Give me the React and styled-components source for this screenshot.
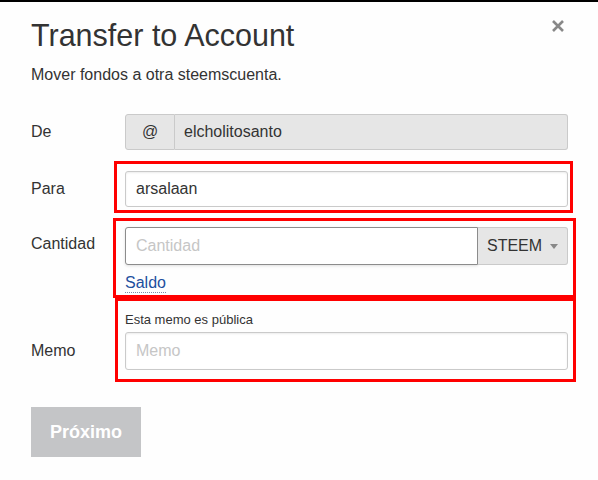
import styled, { createGlobalStyle } from 'styled-components';

const GlobalStyle = createGlobalStyle`
  html, body {
    margin: 0;
    padding: 0;
    background: #fefefe;
  }
  body {
    font-family: 'Liberation Sans', Arial, sans-serif;
    color: #333;
  }
  * {
    box-sizing: border-box;
  }
`;

const TopBar = styled.div`
  height: 2px;
  background: #000;
`;

const Modal = styled.div`
  position: relative;
  display: flow-root;
  width: 598px;
  min-height: 478px;
  padding: 0 30px 0 31px;
  background: #fefefe;
`;

const CloseButton = styled.button`
  position: absolute;
  top: 18px;
  right: 34px;
  width: 12px;
  height: 12px;
  padding: 0;
  border: 0;
  background: none;
  cursor: pointer;
  display: flex;
`;

const Title = styled.h1`
  margin: 15px 0 0;
  font-size: 30.5px;
  line-height: 36px;
  font-weight: 400;
  color: #333;
`;

const Subtitle = styled.p`
  margin: 12px 0 0;
  font-size: 16px;
  line-height: 20px;
  color: #333;
`;

const Form = styled.form`
  margin-top: 29px;
  display: flex;
  flex-direction: column;
`;

const Row = styled.div`
  display: grid;
  grid-template-columns: 94px 1fr;
  align-items: start;
  margin-bottom: ${p => p.$gap || 0}px;
`;

const Label = styled.label`
  padding-top: ${p => p.$offset}px;
  font-size: 16px;
  line-height: 20px;
  color: #333;
`;

const Field = styled.div`
  position: relative;
  display: flex;
  flex-direction: column;

  &::after {
    content: ${p => (p.$mark ? "''" : 'none')};
    position: absolute;
    top: ${p => -(p.$mark?.[0] || 0)}px;
    right: ${p => -(p.$mark?.[1] || 0)}px;
    bottom: ${p => -(p.$mark?.[2] || 0)}px;
    left: ${p => -(p.$mark?.[3] || 0)}px;
    border: 3px solid #ff0000;
    pointer-events: none;
  }
`;

const Group = styled.div`
  display: flex;
  height: ${p => p.$height || 36}px;
`;

const Addon = styled.span`
  display: flex;
  align-items: center;
  justify-content: center;
  width: 50px;
  flex: none;
  background: #e6e6e6;
  border: 1px solid #cacaca;
  border-radius: 3px 0 0 3px;
  font-size: 16px;
  color: #333;
`;

const Input = styled.input`
  display: block;
  flex: ${p => (p.$grow ? '1 1 0' : 'none')};
  width: ${p => (p.$grow ? 'auto' : '100%')};
  min-width: 0;
  height: ${p => p.$height || 36}px;
  margin: 0;
  padding: 0 ${p => p.$pad || 10}px;
  font-family: 'Liberation Sans', Arial, sans-serif;
  font-size: 16px;
  color: #333;
  background: ${p => (p.disabled ? '#e6e6e6' : '#fff')};
  border: 1px solid ${p => p.$border || '#cacaca'};
  border-left-width: ${p => (p.$joined ? 0 : 1)}px;
  border-radius: ${p => p.$radius || '3px'};
  box-shadow: ${p => p.$shadow || 'inset 0 1px 2px rgba(0, 0, 0, 0.08)'};
  outline: none;

  &::placeholder {
    color: #c6c6c6;
  }
  &:disabled {
    color: #333;
  }
`;

const AssetSelect = styled.div`
  display: flex;
  flex: none;
  align-items: center;
  gap: 8px;
  width: 90px;
  padding-left: 9px;
  background: #e6e6e6;
  border: 1px solid #cacaca;
  border-left: 0;
  border-radius: 0 3px 3px 0;
  font-size: 16px;
  color: #333;

  &::after {
    content: '';
    border-left: 4px solid transparent;
    border-right: 4px solid transparent;
    border-top: 5px solid #888;
    margin-top: 1px;
  }
`;

const BalanceLink = styled.a`
  align-self: flex-start;
  margin-top: 8px;
  font-size: 16px;
  line-height: 19px;
  color: #1d4f9e;
  text-decoration: none;
  border-bottom: 1px dotted #7d8aa6;
  cursor: pointer;
`;

const Note = styled.div`
  font-size: 13px;
  line-height: 16px;
  color: #333;
  margin-bottom: 4px;
`;

const SubmitButton = styled.button`
  margin-top: 37px;
  align-self: flex-start;
  width: 110px;
  height: 50px;
  border: 0;
  background: #c4c5c7;
  color: #fff;
  font-family: 'Liberation Sans', Arial, sans-serif;
  font-weight: 700;
  font-size: 18px;
  cursor: not-allowed;
`;

export default function App() {
  return (
    <>
      <GlobalStyle />
      <TopBar />
      <Modal>
        <CloseButton aria-label="Cerrar">
          <svg width="12" height="12" viewBox="0 0 12 12">
            <path d="M1 1 L11 11 M11 1 L1 11" stroke="#888" strokeWidth="2.6" />
          </svg>
        </CloseButton>
        <Title>Transfer to Account</Title>
        <Subtitle>Mover fondos a otra steemscuenta.</Subtitle>
        <Form onSubmit={e => e.preventDefault()}>
          <Row $gap={21}>
            <Label $offset={8}>De</Label>
            <Field>
              <Group>
                <Addon>@</Addon>
                <Input
                  disabled
                  value="elcholitosanto"
                  readOnly
                  $grow
                  $joined
                  $pad={9}
                  $radius="0 3px 3px 0"
                  $shadow="none"
                />
              </Group>
            </Field>
          </Row>
          <Row $gap={20}>
            <Label $offset={8}>Para</Label>
            <Field $mark={[10, 5, 6, 11]}>
              <Input defaultValue="arsalaan" />
            </Field>
          </Row>
          <Row $gap={19}>
            <Label $offset={7}>Cantidad</Label>
            <Field $mark={[9, 8, 5, 12]}>
              <Group $height={38}>
                <Input
                  placeholder="Cantidad"
                  $grow
                  $height={38}
                  $border="#8c8c8c"
                  $radius="3px 0 0 3px"
                  $shadow="0 1px 3px rgba(0, 0, 0, 0.12)"
                />
                <AssetSelect>STEEM</AssetSelect>
              </Group>
              <BalanceLink>Saldo</BalanceLink>
            </Field>
          </Row>
          <Row>
            <Label $offset={29}>Memo</Label>
            <Field $mark={[14, 8, 12, 10]}>
              <Note>Esta memo es pública</Note>
              <Input placeholder="Memo" $height={38} />
            </Field>
          </Row>
          <SubmitButton type="submit" disabled>Próximo</SubmitButton>
        </Form>
      </Modal>
    </>
  );
}
